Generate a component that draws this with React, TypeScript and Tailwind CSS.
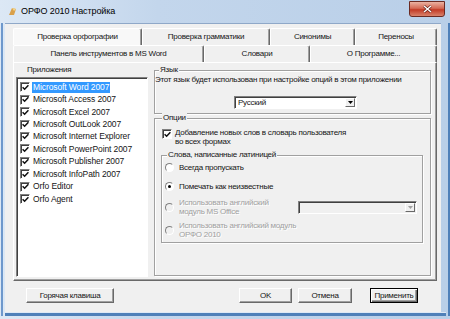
import React from "react";

const font = "font-['Liberation_Sans',Arial,sans-serif]";

function CheckMark() {
  return (
    <svg width="7" height="7" viewBox="0 0 7 7" className="block">
      <path d="M0.6 3.2 L2.6 5.2 L6.4 1.2" fill="none" stroke="#111" strokeWidth="1.5" />
    </svg>
  );
}

function CheckBox() {
  return (
    <div className="w-[10px] h-[10px] shrink-0 border border-t-[#808080] border-l-[#808080] border-r-white border-b-white shadow-[inset_1px_1px_0_#404040] bg-white flex items-center justify-center">
      <CheckMark />
    </div>
  );
}

function Radio({ checked, disabled }: { checked?: boolean; disabled?: boolean }) {
  return (
    <div
      className={
        "w-[9px] h-[9px] shrink-0 rounded-full border border-t-[#808080] border-l-[#808080] border-r-white border-b-white flex items-center justify-center " +
        (disabled ? "bg-[#f0f0f0]" : "bg-white")
      }
    >
      {checked && <div className="w-[3px] h-[3px] rounded-full bg-black" />}
    </div>
  );
}

function Arrow({ color }: { color: string }) {
  return (
    <svg width="5" height="3" viewBox="0 0 5 3" className="block">
      <path d="M0 0 L5 0 L2.5 3 Z" fill={color} />
    </svg>
  );
}

function Tab({ label, className, selected }: { label: string; className: string; selected?: boolean }) {
  return (
    <div
      className={
        "flex items-center justify-center border-l border-t border-l-white border-t-white border-r border-r-[#696969] shadow-[inset_-1px_0_0_#a0a0a0] rounded-t-[2px] h-[17px] " +
        (selected ? "bg-[#f8f8f8]" : "bg-[#f0f0f0]") +
        " " +
        className
      }
    >
      <span className="leading-[10px]">{label}</span>
    </div>
  );
}

function Button({ label, className, def }: { label: string; className: string; def?: boolean }) {
  return (
    <div
      className={
        "h-[15px] flex items-center justify-center bg-[#f0f0f0] " +
        (def
          ? "border border-black shadow-[inset_1px_1px_0_#fff,inset_-1px_-1px_0_#696969,inset_-2px_-2px_0_#a0a0a0]"
          : "border border-t-white border-l-white border-r-[#696969] border-b-[#696969] shadow-[inset_-1px_-1px_0_#a0a0a0]") +
        " " +
        className
      }
    >
      <span className="leading-[10px]">{label}</span>
    </div>
  );
}

function GroupLabel({ text, className }: { text: string; className: string }) {
  return (
    <span className={"absolute top-[-6px] bg-[#f0f0f0] px-[1px] leading-[10px] " + className}>{text}</span>
  );
}

const apps = [
  "Microsoft Word 2007",
  "Microsoft Access 2007",
  "Microsoft Excel 2007",
  "Microsoft OutLook 2007",
  "Microsoft Internet Explorer",
  "Microsoft PowerPoint 2007",
  "Microsoft Publisher 2007",
  "Microsoft InfoPath 2007",
  "Orfo Editor",
  "Orfo Agent",
];

const dis = "text-[#a0a0a0] [text-shadow:1px_1px_0_#ffffff]";

export default function App() {
  return (
    <div
      className={
        "w-[450px] h-[319px] overflow-hidden flex flex-col text-[#151515] text-[8px] tracking-[-0.25px] bg-[linear-gradient(90deg,#dce8f5,#c3d6ec_35%,#b9cfe8)] " +
        font
      }
    >
      {/* Title bar */}
      <div className="h-[23px] shrink-0 flex items-start relative">
        <div className="flex items-center h-[22px] pl-[8px]">
          <svg width="9" height="9" viewBox="0 0 9 9" className="block mr-[4px]">
            <path d="M1 8 L4 1 L8 2 L6 8 Z" fill="#d9a04a" />
            <path d="M4 1 L8 2 L6 4 Z" fill="#f3d58a" />
          </svg>
          <span className="text-[9px] leading-[10px] text-black tracking-[-0.1px]">ОРФО 2010 Настройка</span>
        </div>
        <div className="ml-auto mr-[5px] mt-[1px] w-[36px] h-[16px] rounded-b-[3px] border border-[#6b2a22] bg-[linear-gradient(180deg,#eab2a2,#d46a55_45%,#c23b26_55%,#d9826b)] flex items-center justify-center">
          <svg width="9" height="8" viewBox="0 0 9 8" className="block">
            <path d="M1 1 L8 7 M8 1 L1 7" stroke="#5a1a12" strokeWidth="2.6" />
            <path d="M1 1 L8 7 M8 1 L1 7" stroke="#ffffff" strokeWidth="1.5" />
          </svg>
        </div>
      </div>

      {/* Body */}
      <div className="flex flex-1">
        <div className="ml-[1px] w-[3px] h-[293px] bg-[#6e98cc]" />
        <div className="ml-[2px] flex flex-col">
          {/* Client area */}
          <div className="w-[436px] h-[289px] bg-[#f0f0f0] border-t border-t-[#8fa8c8] flex flex-col pl-[8px] pt-[4px]">
            {/* Tabs row 1 */}
            <div className="flex items-end h-[17px]">
              <Tab label="Проверка орфографии" className="w-[129px]" selected />
              <Tab label="Проверка грамматики" className="w-[128px]" />
              <Tab label="Синонимы" className="w-[85px]" />
              <Tab label="Переносы" className="w-[82px]" />
            </div>
            {/* Tabs row 2 */}
            <div className="flex items-end h-[17px]">
              <Tab label="Панель инструментов в MS Word" className="w-[191px]" />
              <Tab label="Словари" className="w-[106px]" />
              <Tab label="О Программе..." className="w-[127px]" />
            </div>
            {/* Panel */}
            <div className="w-[424px] h-[219px] border border-t-white border-l-white border-r-[#696969] border-b-[#696969] shadow-[inset_-1px_-1px_0_#a0a0a0] flex pl-[2px]">
              {/* Left column */}
              <div className="w-[132px] flex flex-col">
                <div className="h-[14px] flex items-center pl-[11px]">
                  <span className="leading-[10px]">Приложения</span>
                </div>
                <div className="h-[200px] bg-white border border-t-[#808080] border-l-[#808080] border-r-white border-b-white shadow-[inset_1px_1px_0_#404040] pt-[3px] pl-[3px]">
                  {apps.map((a, i) => (
                    <div key={a} className="h-[12.45px] flex items-center">
                      <CheckBox />
                      <span
                        className={
                          "ml-[2px] px-[1px] leading-[11px] whitespace-nowrap text-[8.5px] tracking-[-0.1px] " +
                          (i === 0 ? "bg-[#3399ff] text-white" : "")
                        }
                      >
                        {a}
                      </span>
                    </div>
                  ))}
                </div>
              </div>

              {/* Right column */}
              <div className="ml-[6px] w-[277px] flex flex-col pt-[7px]">
                {/* Язык */}
                <div className="relative h-[44px] border border-[#a0a0a0] shadow-[inset_1px_1px_0_#fff,1px_1px_0_#fff] flex flex-col">
                  <GroupLabel text="Язык" className="left-[4px]" />
                  <div className="pt-[4px] leading-[10px] whitespace-nowrap">
                    Этот язык будет использован при настройке опций в этом приложении
                  </div>
                  <div className="mt-[11px] ml-[79px] w-[123px] h-[13px] bg-white border border-t-[#808080] border-l-[#808080] border-r-white border-b-white shadow-[inset_1px_1px_0_#404040] flex items-center">
                    <span className="pl-[3px] leading-[10px]">Русский</span>
                    <div className="ml-auto mr-[1px] w-[10px] h-[9px] bg-[#f0f0f0] border border-t-white border-l-white border-r-[#696969] border-b-[#696969] flex items-center justify-center">
                      <Arrow color="#000" />
                    </div>
                  </div>
                </div>

                {/* Опции */}
                <div className="relative mt-[4px] h-[158px] border border-[#a0a0a0] shadow-[inset_1px_1px_0_#fff,1px_1px_0_#fff] flex flex-col">
                  <GroupLabel text="Опции" className="left-[7px]" />
                  <div className="flex items-start pt-[9px] pl-[7px]">
                    <div className="mt-[1px]">
                      <CheckBox />
                    </div>
                    <div className="ml-[3px] leading-[9px]">
                      Добавление новых слов в словарь пользователя
                      <br />
                      во всех формах
                    </div>
                  </div>

                  {/* Слова, написанные латиницей */}
                  <div className="relative mt-[9px] ml-[6px] w-[262px] h-[88px] border border-[#a0a0a0] shadow-[inset_1px_1px_0_#fff,1px_1px_0_#fff] flex flex-col pl-[3px]">
                    <GroupLabel text="Слова, написанные латиницей" className="left-[5px]" />
                    <div className="mt-[7px] flex items-center h-[9px]">
                      <Radio />
                      <span className="ml-[5px] leading-[9px]">Всегда пропускать</span>
                    </div>
                    <div className="mt-[10px] flex items-center h-[9px]">
                      <Radio checked />
                      <span className="ml-[5px] leading-[9px]">Помечать как неизвестные</span>
                    </div>
                    <div className="mt-[7px] flex items-center h-[18px]">
                      <Radio disabled />
                      <span className={"ml-[5px] leading-[9px] " + dis}>
                        Использовать английский
                        <br />
                        модуль MS Office
                      </span>
                      <div className="ml-auto mr-[5px] w-[119px] h-[13px] bg-[#f0f0f0] border border-t-[#808080] border-l-[#808080] border-r-white border-b-white shadow-[inset_1px_1px_0_#404040] flex items-center">
                        <div className="ml-auto mr-[1px] w-[10px] h-[9px] bg-[#f0f0f0] border border-t-white border-l-white border-r-[#696969] border-b-[#696969] flex items-center justify-center">
                          <Arrow color="#a0a0a0" />
                        </div>
                      </div>
                    </div>
                    <div className="mt-[5px] flex items-center h-[18px]">
                      <Radio disabled />
                      <span className={"ml-[5px] leading-[9px] " + dis}>
                        Использовать английский модуль
                        <br />
                        ОРФО 2010
                      </span>
                    </div>
                  </div>
                </div>
              </div>
            </div>

            {/* Buttons */}
            <div className="mt-[7px] flex items-center pl-[13px]">
              <Button label="Горячая клавиша" className="w-[88px]" />
              <Button label="OK" className="ml-[125px] w-[53px]" />
              <Button label="Отмена" className="ml-[6px] w-[54px]" />
              <Button label="Применить" className="ml-[18px] w-[48px]" def />
            </div>
          </div>
          <div className="h-[1px] bg-[#dfe9f5]" />
          <div className="h-[3px] w-[441px] bg-[#4f80b9]" />
        </div>
        <div className="ml-[2px] w-[3px] h-[293px] bg-[#4f80b9]" />
      </div>
    </div>
  );
}
